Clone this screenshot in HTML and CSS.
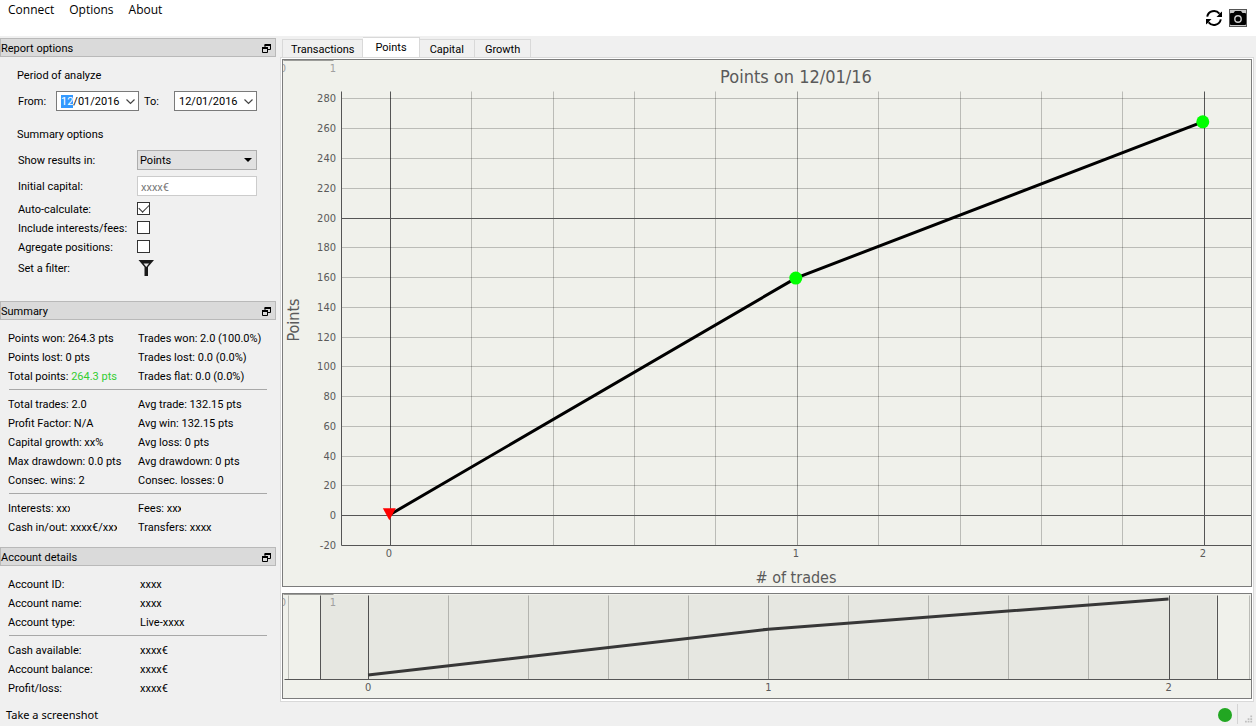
FILE: index.html
```html
<!DOCTYPE html>
<html lang="en">
<head>
  <meta charset="UTF-8" />
  <meta name="viewport" content="width=device-width, initial-scale=1" />
  <title>Trading report</title>
  <link rel="stylesheet" href="styles.css">
</head>
<body>

  <!-- Menu bar and toolbar -->
  <header class="top-bar">
    <nav class="menu">
      <a href="#">Connect</a>
      <a href="#">Options</a>
      <a href="#">About</a>
    </nav>
    <div class="toolbar">
      <button type="button" class="icon-button" aria-label="Refresh">
        <svg width="18" height="18" viewBox="0 0 18 18">
          <path d="M2.2 7.6A7 7 0 0 1 14.4 4.6M15.8 10.4A7 7 0 0 1 3.6 13.4" fill="none" stroke="#000" stroke-width="2" />
          <path d="M17 2.500V8H11.5L13.5 6 14.600 4.500ZM1 15.500V10H6.5L4.5 12 3.400 13.500Z" />
        </svg>
      </button>
      <button type="button" class="icon-button" aria-label="Screenshot">
        <svg width="18" height="18" viewBox="0 0 18 18">
          <rect x="0.5" y="0.5" width="17" height="17" fill="#c8c8c8" stroke="#555" />
          <path d="M1 5Q1 4 2 4H4.5L6 2H12L13.500 4H16Q17 4 17 5V15Q17 16 16 16H2Q1 16 1 15Z" />
          <circle cx="9" cy="10" r="3.200" fill="#000" stroke="#ccc" stroke-width="1.400" />
        </svg>
      </button>
    </div>
  </header>

  <main class="workspace">
    <aside class="docks">

      <!-- Report options -->
      <section class="dock">
        <h2 class="dock-title">Report options
          <button type="button" class="float-button" aria-label="Float report options">
            <svg width="9" height="9" viewBox="0 0 9 9"><path d="M3 3V1H8.500V5.500H6M0.500 4H5.500V8.500H0.500Z" fill="none" stroke="#000" /><path d="M2.500 0H9V2H2.500ZM0 3H6V5H0Z" /></svg>
          </button>
        </h2>
        <form class="options">
          <h3>Period of analyze</h3>
          <div class="period">
            <label for="from">From:</label>
            <span class="date-box">
              <input type="text" id="from" value="12/01/2016">
              <svg width="9" height="6" viewBox="0 0 9 6"><path d="M0.500 0.500L4.500 4.500 8.500 0.500" fill="none" stroke="#444" stroke-width="1.200" /></svg>
            </span>
            <label for="to">To:</label>
            <span class="date-box">
              <input type="text" id="to" value="12/01/2016">
              <svg width="9" height="6" viewBox="0 0 9 6"><path d="M0.500 0.500L4.500 4.500 8.500 0.500" fill="none" stroke="#444" stroke-width="1.200" /></svg>
            </span>
          </div>

          <h3>Summary options</h3>
          <div class="field">
            <label for="unit">Show results in:</label>
            <span class="select-box">
              <select id="unit">
                <option>Points</option>
              </select>
              <svg width="8" height="4" viewBox="0 0 8 4"><path d="M0 0H8L4 4Z" /></svg>
            </span>
          </div>
          <div class="field">
            <label for="capital">Initial capital:</label>
            <input type="text" id="capital" class="text-box" value="xxxx€" disabled>
          </div>
          <div class="field check">
            <label for="auto">Auto-calculate:</label>
            <input type="checkbox" id="auto" checked>
          </div>
          <div class="field check">
            <label for="fees">Include interests/fees:</label>
            <input type="checkbox" id="fees">
          </div>
          <div class="field check">
            <label for="aggregate">Agregate positions:</label>
            <input type="checkbox" id="aggregate">
          </div>
          <div class="field filter">
            <label for="filter">Set a filter:</label>
            <button type="button" id="filter" class="icon-button">
              <svg width="18" height="16" viewBox="0 0 18 16">
                <path d="M1.500 0H17L11 7V16H7.500V7Z" fill="#1a1a1a" />
                <path d="M6.500 3.500H12L9.300 7Z" fill="#e8e8e8" />
              </svg>
            </button>
          </div>
        </form>
      </section>

      <!-- Summary -->
      <section class="dock">
        <h2 class="dock-title">Summary
          <button type="button" class="float-button" aria-label="Float summary">
            <svg width="9" height="9" viewBox="0 0 9 9"><path d="M3 3V1H8.500V5.500H6M0.500 4H5.500V8.500H0.500Z" fill="none" stroke="#000" /><path d="M2.500 0H9V2H2.500ZM0 3H6V5H0Z" /></svg>
          </button>
        </h2>
        <div class="stats">
          <ul>
            <li>Points won: 264.3 pts</li><li>Trades won: 2.0 (100.0%)</li>
            <li>Points lost: 0 pts</li><li>Trades lost: 0.0 (0.0%)</li>
            <li>Total points: <span class="gain">264.3 pts</span></li><li>Trades flat: 0.0 (0.0%)</li>
          </ul>
          <hr>
          <ul>
            <li>Total trades: 2.0</li><li>Avg trade: 132.15 pts</li>
            <li>Profit Factor: N/A</li><li>Avg win: 132.15 pts</li>
            <li>Capital growth: xx%</li><li>Avg loss: 0 pts</li>
            <li>Max drawdown: 0.0 pts</li><li>Avg drawdown: 0 pts</li>
            <li>Consec. wins: 2</li><li>Consec. losses: 0</li>
          </ul>
          <hr>
          <ul>
            <li>Interests: <span class="cut">xxx</span></li><li>Fees: <span class="cut">xxx</span></li>
            <li>Cash in/out: xxxx€/<span class="cut">xxx</span></li><li>Transfers: xxxx</li>
          </ul>
        </div>
      </section>

      <!-- Account details -->
      <section class="dock">
        <h2 class="dock-title">Account details
          <button type="button" class="float-button" aria-label="Float account details">
            <svg width="9" height="9" viewBox="0 0 9 9"><path d="M3 3V1H8.500V5.500H6M0.500 4H5.500V8.500H0.500Z" fill="none" stroke="#000" /><path d="M2.500 0H9V2H2.500ZM0 3H6V5H0Z" /></svg>
          </button>
        </h2>
        <div class="stats account">
          <dl>
            <dt>Account ID:</dt><dd>xxxx</dd>
            <dt>Account name:</dt><dd>xxxx</dd>
            <dt>Account type:</dt><dd>Live-xxxx</dd>
          </dl>
          <hr>
          <dl>
            <dt>Cash available:</dt><dd>xxxx€</dd>
            <dt>Account balance:</dt><dd>xxxx€</dd>
            <dt>Profit/loss:</dt><dd>xxxx€</dd>
          </dl>
        </div>
      </section>
    </aside>

    <!-- Charts -->
    <section class="charts">
      <div class="tabs" role="tablist">
        <button type="button" role="tab">Transactions</button>
        <button type="button" role="tab" class="active" aria-selected="true">Points</button>
        <button type="button" role="tab">Capital</button>
        <button type="button" role="tab">Growth</button>
      </div>
      <div class="pane">
        <div class="plot plot-main"><svg id="main-plot"></svg></div>
        <div class="plot plot-range"><svg id="range-plot"></svg></div>
      </div>
    </section>
  </main>

  <footer class="status-bar">
    <span>Take a screenshot</span>
    <span class="status-light"></span>
    <svg class="grip" width="9" height="9" viewBox="0 0 9 9" fill="#bfbfbf">
      <path d="M6 0H8V2H6ZM3 3H5V5H3ZM6 3H8V5H6ZM0 6H2V8H0ZM3 6H5V8H3ZM6 6H8V8H6Z" />
    </svg>
  </footer>

  <script src="plots.js"></script>
</body>
</html>
```

FILE: styles.css
```css
* {
  margin: 0;
  padding: 0;
  box-sizing: border-box;
}

body {
  display: flex;
  flex-direction: column;
  min-height: 100vh;
  background: #f0f0f0;
  color: #000;
  font: 11px/19px Roboto, sans-serif;
}

button, input, select {
  font: inherit;
  color: inherit;
}

/* Menu bar */
.top-bar {
  display: flex;
  justify-content: space-between;
  height: 36px;
  background: #fff;
}

.menu {
  display: flex;
  gap: 15px;
  padding-left: 8px;
  font: 12px/20px "Open Sans", sans-serif;
}

.menu a {
  color: #000;
  text-decoration: none;
}

.toolbar {
  display: flex;
  gap: 6px;
  padding: 9px 9px 0 0;
}

.icon-button {
  display: flex;
  align-items: center;
  height: 18px;
  border: none;
  background: none;
}

/* Layout */
.workspace {
  display: flex;
  flex: 1;
}

.docks {
  display: flex;
  flex-direction: column;
  width: 276px;
  padding-top: 2px;
}

/* Dock panels */
.dock-title {
  display: flex;
  align-items: center;
  justify-content: space-between;
  height: 19px;
  padding: 2px 4px 0 0;
  border: 1px solid #b9b9b9;
  background: #dadada;
  font-size: 11px;
  font-weight: normal;
}

.float-button {
  display: flex;
  border: none;
  background: none;
}

.options {
  padding: 9px 16px 21px 18px;
}

.options h3 {
  font-size: 11px;
  font-weight: normal;
  margin-left: -1px;
}

.period {
  display: grid;
  grid-template-columns: 38px 83px 35px 83px;
  align-items: center;
  margin: 6px 0 14px;
}

.period label:nth-of-type(2) {
  padding-left: 5px;
}

.date-box, .select-box {
  position: relative;
  display: flex;
}

.date-box input {
  width: 100%;
  height: 20px;
  padding: 1px 0 0 4px;
  border: 1px solid #7a7a7a;
  background: #fff;
  outline: none;
}

.date-box input::selection {
  background: #3399ff;
  color: #fff;
}

.date-box svg {
  position: absolute;
  right: 4px;
  top: 8px;
}

.options h3 + .field {
  margin-top: 3px;
}

.field {
  display: grid;
  grid-template-columns: 119px 120px;
  align-items: center;
  height: 26px;
}

.field.check {
  height: 19px;
}

.field.filter {
  height: 24px;
}

.check label, .stats li, .stats dt, .stats dd {
  padding-top: 2px;
  line-height: 17px;
}

.select-box select {
  width: 100%;
  height: 20px;
  padding-left: 2px;
  border: 1px solid #adadad;
  border-radius: 0;
  background: #e1e1e1;
  appearance: none;
}

.select-box svg {
  position: absolute;
  right: 5px;
  top: 8px;
}

.text-box {
  height: 20px;
  padding: 2px 3px 0;
  border: 1px solid #ccc;
  background: #fff;
  color: #787878;
}

.check input {
  display: grid;
  place-items: center;
  width: 13px;
  height: 13px;
  border: 1px solid #333;
  background: #fff;
  appearance: none;
}

.check input:checked::before {
  content: "";
  width: 9px;
  height: 5px;
  margin-bottom: 3px;
  border: solid #333;
  border-width: 0 0 1px 1px;
  transform: rotate(-45deg);
}

/* Summary and account figures */
.stats {
  padding: 8px 9px 11px 8px;
}

.stats ul, .stats dl {
  display: grid;
  grid-template-columns: 130px 1fr;
  list-style: none;
  white-space: nowrap;
}

.stats.account {
  padding-bottom: 4px;
}

.stats.account dl {
  grid-template-columns: 132px 1fr;
}

.stats hr {
  margin: 4px 0 4px 1px;
  border: none;
  border-top: 1px solid #a8a8a8;
}

.gain {
  color: #32cd32;
}

.cut {
  display: inline-block;
  width: 14px;
  overflow: hidden;
  vertical-align: top;
}

/* Tabs */
.charts {
  display: flex;
  flex: 1;
  flex-direction: column;
  min-width: 0;
  padding: 1px 2px 0 4px;
}

.tabs {
  display: flex;
  align-items: flex-end;
  height: 20px;
  padding-left: 2px;
}

.tabs button {
  height: 18px;
  padding: 2px 10px 0;
  border: 1px solid #d9d9d9;
  border-width: 1px 1px 0 0;
  background: #f0f0f0;
  line-height: 15px;
}

.tabs button:first-child {
  padding: 2px 8px 0;
  border-left-width: 1px;
}

.tabs .active {
  height: 20px;
  padding: 0 12px;
  background: #fff;
}

.pane {
  display: flex;
  flex: 1;
  flex-direction: column;
  gap: 6px;
  padding: 1px;
  padding-bottom: 2px;
  border: 1px solid #d9d9d9;
  background: #fff;
}

/* Plots */
.plot {
  border: 1px solid #7c7c7c;
  background: #f0f1eb;
}

.plot svg {
  display: block;
  width: 100%;
  height: 100%;
}

.plot-main {
  flex: 1;
}

.plot-range {
  height: 106px;
}

.plot text {
  fill: #5a5a5a;
  font-family: "DejaVu Sans Condensed", "DejaVu Sans", sans-serif;
  font-size: 11px;
  text-anchor: middle;
}

.plot .tick-y {
  text-anchor: end;
}

.plot .faded {
  fill: #a0a0a0;
}

.plot .title {
  font-size: 18px;
}

.plot .axis-title {
  font-size: 16px;
}

.grid-light {
  stroke: #000;
  stroke-opacity: 0.22;
}

.grid-mid {
  stroke: #000;
  stroke-opacity: 0.35;
}

.grid-dark {
  stroke: #555;
}

.region {
  fill: #000;
  fill-opacity: 0.04;
}

.curve {
  fill: none;
  stroke: #000;
  stroke-width: 3;
}

.curve.dim {
  stroke: #3a3a3a;
}

.win {
  fill: #00ff00;
}

.start {
  fill: #ff0000;
}

/* Status bar */
.status-bar {
  display: flex;
  align-items: center;
  height: 24px;
  padding: 2px 2px 0 6px;
  font: 11px/20px "Noto Sans", sans-serif;
}

.status-light {
  width: 14px;
  height: 14px;
  margin-left: auto;
  border-radius: 50%;
  background: #22a722;
}

.grip {
  align-self: stretch;
  width: 17px;
  height: 20px;
  margin-left: 5px;
  padding: 11px 1px 0 7px;
  border-left: 1px solid #d4d4d4;
}
```

FILE: plots.js
```js
const points = [[0, 0], [1, 159.3], [2, 264.3]];

function add(svg, tag, attrs, text) {
  const el = document.createElementNS("http://www.w3.org/2000/svg", tag);
  for (const key in attrs) {
    el.setAttribute(key, attrs[key]);
  }
  if (text !== undefined) {
    el.textContent = text;
  }
  svg.appendChild(el);
}

// Lines sit on half pixels so that they stay crisp
function line(svg, x1, y1, x2, y2, cls) {
  const snap = v => Math.round(v) + 0.5;
  add(svg, "line", { x1: snap(x1), y1: snap(y1), x2: snap(x2), y2: snap(y2), class: cls });
}

// Unlinked default axis in the top left corner
function cornerAxis(svg) {
  line(svg, 0, 0, 50, 0, "grid-mid");
  add(svg, "text", { x: 0, y: 12, class: "faded" }, "0");
  add(svg, "text", { x: 50, y: 12, class: "faded" }, "1");
}

function drawMain() {
  const svg = document.getElementById("main-plot");
  svg.innerHTML = "";
  const w = svg.clientWidth;
  const h = svg.clientHeight;
  const left = 58, top = 31, bottom = h - 41;
  const x = v => left + (v + 0.12) / 2.236 * (w - left);
  const y = v => bottom - (v + 20) / 305 * (bottom - top);

  for (let v = 0; v <= 10; v++) {
    const cls = v === 5 ? "grid-mid" : v % 10 === 0 ? "grid-dark" : "grid-light";
    line(svg, x(v / 5), top, x(v / 5), bottom, cls);
  }
  for (let v = -20; v <= 280; v += 20) {
    if (v > -20) {
      line(svg, left, y(v), w, y(v), v % 200 === 0 ? "grid-dark" : "grid-light");
    }
    add(svg, "text", { x: left - 5, y: Math.round(y(v)) + 4, class: "tick-y" }, v);
  }
  line(svg, left, top, left, bottom, "grid-dark");
  line(svg, left, bottom, w, bottom, "grid-dark");

  const path = points.map(p => `${x(p[0]) - 1},${y(p[1])}`).join(" ");
  add(svg, "polyline", { points: path, class: "curve" });
  points.forEach((p, i) => {
    const px = x(p[0]) - 1;
    const py = y(p[1]);
    add(svg, "text", { x: px, y: bottom + 12 }, p[0]);
    if (i === 0) {
      add(svg, "path", { d: `M${px - 6} ${py - 7}h13l-6.5 12z`, class: "start" });
    } else {
      add(svg, "circle", { cx: px, cy: py, r: 6.5, class: "win" });
    }
  });

  const middle = (left + w) / 2;
  add(svg, "text", { x: middle, y: 23, class: "title" }, "Points on 12/01/16");
  add(svg, "text", { x: middle, y: h - 3, class: "axis-title" }, "# of trades");
  add(svg, "text", { transform: `translate(16 ${(top + bottom) / 2 + 2}) rotate(-90)`, class: "axis-title" }, "Points");
  cornerAxis(svg);
}

function drawRange() {
  const svg = document.getElementById("range-plot");
  svg.innerHTML = "";
  const w = svg.clientWidth;
  const h = svg.clientHeight;
  const top = 1, bottom = h - 19;
  const x = v => 1 + (v + 0.21) / 2.416 * (w - 1);
  const y = v => bottom - (v + 14) / 292 * (bottom - top);

  for (let v = -1; v <= 11; v++) {
    const cls = v === 5 ? "grid-mid" : v % 10 === 0 ? "grid-dark" : "grid-light";
    line(svg, x(v / 5), top, x(v / 5), bottom, cls);
  }
  line(svg, 1, bottom, w, bottom, "grid-dark");
  add(svg, "polyline", { points: points.map(p => `${x(p[0])},${y(p[1])}`).join(" "), class: "curve dim" });
  points.forEach(p => add(svg, "text", { x: x(p[0]), y: bottom + 12 }, p[0]));

  add(svg, "rect", { x: x(-0.12), y: top, width: x(2.12) - x(-0.12), height: bottom - top, class: "region" });
  line(svg, x(-0.12), top, x(-0.12), bottom, "grid-dark");
  line(svg, x(2.12), top, x(2.12), bottom, "grid-dark");
  cornerAxis(svg);
}

function draw() {
  drawMain();
  drawRange();
}

draw();
window.addEventListener("resize", draw);

// The day part of the first date is selected when the window opens
const from = document.getElementById("from");
from.focus();
from.setSelectionRange(0, 2);
```
